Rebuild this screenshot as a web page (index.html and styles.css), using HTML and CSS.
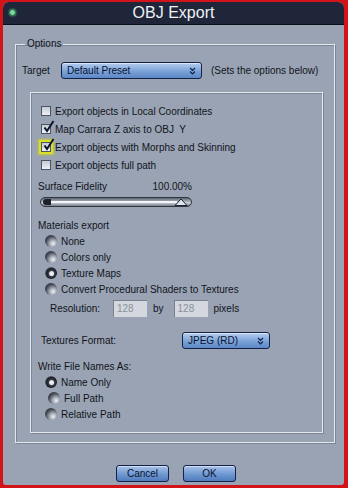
FILE: index.html
```html
<!DOCTYPE html>
<html lang="en">
<head>
  <meta charset="UTF-8">
  <meta name="viewport" content="width=device-width, initial-scale=1.0">
  <title>OBJ Export</title>
  <link rel="stylesheet" href="styles.css">
</head>
<body>
  <div class="window">
    <div class="titlebar">
      <span class="light"></span>
      <h1>OBJ Export</h1>
    </div>
    <div class="content">
      <fieldset class="options">
        <legend>Options</legend>
        <div class="target-row">
          <span class="target-label">Target</span>
          <div class="select preset">
            <span>Default Preset</span>
            <svg class="arrows" width="7" height="8" viewBox="0 0 7 8"><path d="M1 1 L3.5 3.5 L6 1 M1 4.5 L3.5 7 L6 4.5" fill="none" stroke="#10204a" stroke-width="1.2"/></svg>
          </div>
          <span class="hint">(Sets the options below)</span>
        </div>

        <div class="inner">
          <div class="check-row">
            <span class="box"></span>
            <span>Export objects in Local Coordinates</span>
          </div>
          <div class="check-row">
            <span class="box checked"><svg width="12" height="13" viewBox="0 0 12 13"><path d="M1.5 7.5 L4 11 L10.5 1" fill="none" stroke="#0c1530" stroke-width="2"/></svg></span>
            <span>Map Carrara Z axis to OBJ&nbsp; Y</span>
          </div>
          <div class="check-row">
            <span class="box checked glow"><svg width="12" height="13" viewBox="0 0 12 13"><path d="M1.5 7.5 L4 11 L10.5 1" fill="none" stroke="#0c1530" stroke-width="2"/></svg></span>
            <span>Export objects with Morphs and Skinning</span>
          </div>
          <div class="check-row">
            <span class="box"></span>
            <span>Export objects full path</span>
          </div>

          <div class="fidelity">
            <span>Surface Fidelity</span>
            <span>100.00%</span>
          </div>
          <div class="slider">
            <span class="slider-end"></span>
            <span class="slider-line"></span>
            <svg class="thumb" width="14" height="8" viewBox="0 0 14 8"><path d="M1 7.5 L7 1 L13 7.5 Z" fill="#dfe6ef" stroke="#1c2230" stroke-width="1"/></svg>
          </div>

          <div class="section-label">Materials export</div>
          <div class="radio-row"><span class="radio"></span>None</div>
          <div class="radio-row"><span class="radio"></span>Colors only</div>
          <div class="radio-row"><span class="radio on"></span>Texture Maps</div>
          <div class="radio-row"><span class="radio"></span>Convert Procedural Shaders to Textures</div>

          <div class="resolution">
            <span class="res-label">Resolution:</span>
            <span class="field">128</span>
            <span class="by">by</span>
            <span class="field">128</span>
            <span class="pixels">pixels</span>
          </div>

          <div class="format-row">
            <span class="format-label">Textures Format:</span>
            <div class="select format">
              <span>JPEG (RD)</span>
              <svg class="arrows" width="7" height="8" viewBox="0 0 7 8"><path d="M1 1 L3.5 3.5 L6 1 M1 4.5 L3.5 7 L6 4.5" fill="none" stroke="#10204a" stroke-width="1.2"/></svg>
            </div>
          </div>

          <div class="section-label names">Write File Names As:</div>
          <div class="radio-row"><span class="radio on"></span>Name Only</div>
          <div class="radio-row shifted"><span class="radio"></span>Full Path</div>
          <div class="radio-row"><span class="radio"></span>Relative Path</div>
        </div>
      </fieldset>

      <div class="buttons">
        <button type="button" class="btn">Cancel</button>
        <button type="button" class="btn">OK</button>
      </div>
    </div>
  </div>
</body>
</html>
```

FILE: styles.css
```css
html, body {
  margin: 0;
  padding: 0;
}
body {
  background-color: #d2141a;
  font-family: "Liberation Sans", Arial, sans-serif;
  font-size: 10px;
  color: #10141c;
  width: 348px;
  height: 488px;
  overflow: hidden;
}
.window {
  margin: 2px 4px 3px 3px;
  height: 483px;
  background-color: #9aa3b3;
  border-radius: 6px 6px 3px 3px;
  overflow: hidden;
  display: flex;
  flex-direction: column;
}
.titlebar {
  height: 22px;
  background-color: #1f2639;
  border-bottom: 1px solid #0a0e18;
  display: flex;
  align-items: center;
  justify-content: center;
  position: relative;
}
.titlebar h1 {
  margin: 0;
  font-size: 16px;
  font-weight: normal;
  color: #eef1f6;
  line-height: 22px;
}
.light {
  position: absolute;
  left: 6px;
  top: 7px;
  width: 5px;
  height: 5px;
  border-radius: 50%;
  background-color: #7fd8a0;
  border: 1px solid #1a6a40;
  box-shadow: 0 0 2px #5ac080;
}
.content {
  padding: 12px 9px 0 12px;
  display: flex;
  flex-direction: column;
}
.options {
  margin: 0;
  padding: 10px 11px 9px 6px;
  border: 1px solid #e4e8ee;
  box-shadow: inset 1px 1px 0 #7c8594, 1px 1px 0 #7c8594;
}
.options legend {
  padding: 0 2px;
  margin-left: 3px;
  line-height: 14px;
}
.target-row {
  display: flex;
  align-items: center;
  height: 18px;
  white-space: nowrap;
}
.target-label {
  width: 39px;
}
.select {
  display: flex;
  align-items: center;
  justify-content: space-between;
  box-sizing: border-box;
  height: 17px;
  padding: 1px 5px 0 5px;
  border: 1px solid #152248;
  border-radius: 3px;
  background: linear-gradient(#b4cdee, #7aa2d8 55%, #5d88c6);
  box-shadow: inset 0 1px 0 #dbe7f7;
  color: #0a1230;
}
.preset {
  width: 141px;
}
.hint {
  margin-left: 9px;
}
.inner {
  margin: 13px 0 0 8px;
  padding: 9px 0 10px 10px;
  border: 1px solid #e4e8ee;
  box-shadow: inset 1px 1px 0 #7c8594, 1px 1px 0 #7c8594;
  display: flex;
  flex-direction: column;
}
.check-row {
  display: flex;
  align-items: center;
  height: 18px;
  gap: 4px;
}
.box {
  width: 8px;
  height: 8px;
  border: 1px solid #4c5362;
  background: linear-gradient(#c4cad4, #eef1f5);
  position: relative;
}
.box svg {
  position: absolute;
  left: 1px;
  top: -5px;
}
.glow {
  box-shadow: 0 0 0 2px #d8e02a, 0 0 2px 3px #c0ca40;
}
.fidelity {
  display: flex;
  justify-content: space-between;
  width: 154px;
  margin: 6px 0 0 -3px;
  height: 14px;
  line-height: 14px;
}
.slider {
  position: relative;
  width: 152px;
  height: 10px;
  margin: 3px 0 0 -1px;
  box-sizing: border-box;
  border: 1px solid #30353f;
  border-radius: 5px;
  background: linear-gradient(#5c6472, #aab1bd 45%, #c9ced6 60%, #757d8b);
}
.slider-end {
  position: absolute;
  left: 2px;
  top: 1px;
  width: 8px;
  height: 6px;
  border-radius: 3px 0 0 3px;
  background-color: #1e222a;
}
.slider-line {
  position: absolute;
  left: 10px;
  right: 14px;
  top: 3px;
  height: 2px;
  background-color: #f4f6fa;
}
.thumb {
  position: absolute;
  right: 3px;
  top: 0;
}
.section-label {
  margin: 12px 0 0 -3px;
  height: 14px;
  line-height: 14px;
}
.section-label.names {
  margin-top: 11px;
}
.radio-row {
  display: flex;
  align-items: center;
  height: 16px;
  gap: 4px;
  padding-left: 4px;
}
.radio-row.shifted {
  padding-left: 7px;
}
.radio {
  width: 12px;
  height: 12px;
  border-radius: 50%;
  background: radial-gradient(circle at 68% 72%, #eef0f4 0, #a8afba 28%, #454a54 62%, #1c1f25 100%);
}
.radio.on {
  background: radial-gradient(circle at 55% 55%, #f6f8fb 0, #dfe3e9 22%, #3a3f48 32%, #1a1d23 55%, #8e95a0 80%, #e2e6ec 100%);
}
.resolution {
  display: flex;
  align-items: center;
  height: 18px;
  margin-top: 2px;
  padding-left: 9px;
}
.res-label {
  width: 63px;
}
.field {
  box-sizing: border-box;
  width: 34px;
  height: 17px;
  line-height: 16px;
  padding-left: 3px;
  background-color: #d4d8de;
  border-top: 1px solid #7a808c;
  border-left: 1px solid #7a808c;
  color: #8a909a;
}
.by {
  margin: 0 10px 0 6px;
}
.pixels {
  margin-left: 6px;
}
.format-row {
  display: flex;
  align-items: center;
  height: 18px;
  margin-top: 14px;
}
.format-label {
  width: 141px;
}
.format {
  width: 88px;
}
.buttons {
  display: flex;
  justify-content: center;
  gap: 14px;
  margin-top: 22px;
  padding-left: 2px;
}
.btn {
  width: 53px;
  height: 17px;
  padding: 0;
  font-family: "Liberation Sans", Arial, sans-serif;
  font-size: 10px;
  color: #0a1230;
  border: 1px solid #14224a;
  border-radius: 3px;
  background: linear-gradient(#a8c3ea, #6f98d2 55%, #4f7cbc);
  box-shadow: inset 0 1px 0 #d0def3;
}
```
